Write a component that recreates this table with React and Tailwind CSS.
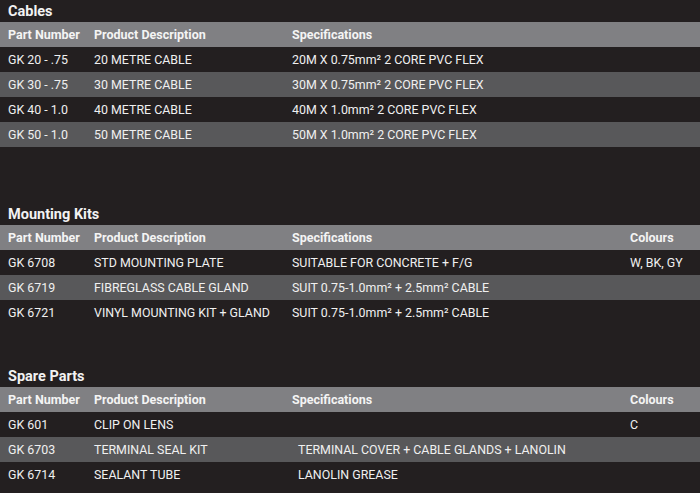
import React from 'react';

const cables = [
  ['GK 20 - .75', '20 METRE CABLE', '20M X 0.75mm² 2 CORE PVC FLEX'],
  ['GK 30 - .75', '30 METRE CABLE', '30M X 0.75mm² 2 CORE PVC FLEX'],
  ['GK 40 - 1.0', '40 METRE CABLE', '40M X 1.0mm² 2 CORE PVC FLEX'],
  ['GK 50 - 1.0', '50 METRE CABLE', '50M X 1.0mm² 2 CORE PVC FLEX'],
];

const mounting = [
  ['GK 6708', 'STD MOUNTING PLATE', 'SUITABLE FOR CONCRETE + F/G', 'W, BK, GY'],
  ['GK 6719', 'FIBREGLASS CABLE GLAND', 'SUIT 0.75-1.0mm² + 2.5mm² CABLE', ''],
  ['GK 6721', 'VINYL MOUNTING KIT + GLAND', 'SUIT 0.75-1.0mm² + 2.5mm² CABLE', ''],
];

const spares = [
  ['GK 601', 'CLIP ON LENS', '', 'C'],
  ['GK 6703', 'TERMINAL SEAL KIT', 'TERMINAL COVER + CABLE GLANDS + LANOLIN', ''],
  ['GK 6714', 'SEALANT TUBE', 'LANOLIN GREASE', ''],
];

function Section({ title, rows, colours, specIndent, className }) {
  return (
    <div className={className}>
      <div className="h-[22px] pl-2 pt-[2px] flex items-center text-[14.5px] font-bold text-[#f2f2f2]">
        {title}
      </div>
      <div className="grid grid-cols-[86px_198px_338px_1fr] h-[25px] items-center pl-2 pt-[1px] bg-[#808083] text-[12.5px] font-bold text-[#f4f4f4]">
        <div>Part Number</div>
        <div>Product Description</div>
        <div>Specifications</div>
        <div>{colours ? 'Colours' : ''}</div>
      </div>
      {rows.map((r, i) => (
        <div
          key={i}
          className={
            'grid grid-cols-[86px_198px_338px_1fr] h-[25px] items-center pl-2 pt-[2px] text-[12.4px] text-[#f0f0f0] ' +
            (i % 2 === 1 ? 'bg-[#58585a]' : '')
          }
        >
          <div>{r[0]}</div>
          <div>{r[1]}</div>
          <div className={specIndent ? 'pl-[6px]' : ''}>{r[2]}</div>
          <div>{r[3] || ''}</div>
        </div>
      ))}
    </div>
  );
}

export default function App() {
  return (
    <div className="w-[700px] h-[493px] bg-[#231f20] overflow-hidden font-['Roboto',sans-serif]">
      <Section title="Cables" rows={cables} />
      <Section title="Mounting Kits" rows={mounting} colours className="mt-[56px]" />
      <Section title="Spare Parts" rows={spares} colours specIndent className="mt-[40px]" />
    </div>
  );
}
